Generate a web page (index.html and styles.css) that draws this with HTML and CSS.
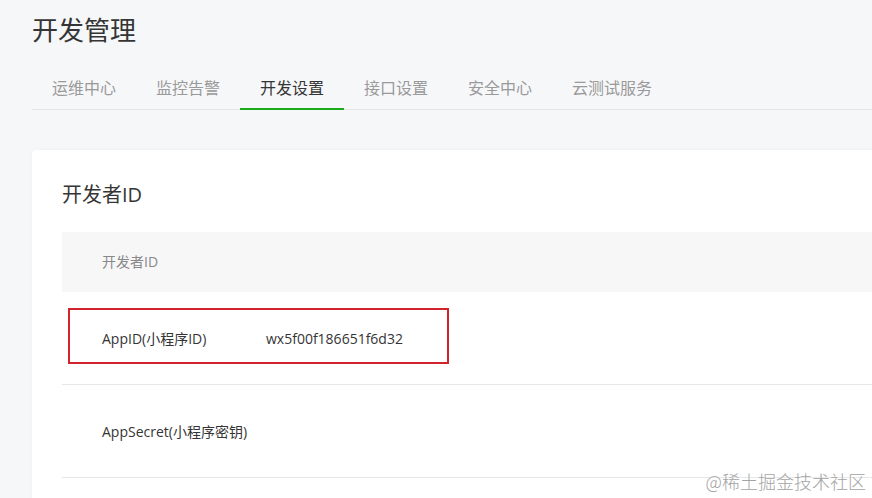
FILE: index.html
```html
<!DOCTYPE html>
<html lang="zh-CN">
<head>
<meta charset="utf-8">
<title>开发管理</title>
<link rel="stylesheet" href="styles.css">
</head>
<body>
<div class="page">
  <h1 class="title">开发管理</h1>
  <nav class="tabs">
    <a class="tab">运维中心</a>
    <a class="tab">监控告警</a>
    <a class="tab active">开发设置</a>
    <a class="tab">接口设置</a>
    <a class="tab">安全中心</a>
    <a class="tab">云测试服务</a>
  </nav>
  <section class="card">
    <h2 class="card-title">开发者ID</h2>
    <div class="table">
      <div class="thead">开发者ID</div>
      <div class="row">
        <div class="label">AppID(小程序ID)</div>
        <div class="value">wx5f00f186651f6d32</div>
        <div class="highlight"></div>
      </div>
      <div class="row">
        <div class="label">AppSecret(小程序密钥)</div>
        <div class="value"></div>
      </div>
    </div>
  </section>
</div>
<div class="watermark">@稀土掘金技术社区</div>
</body>
</html>
```
FILE: styles.css
```css
html, body {
  margin: 0;
  padding: 0;
}
body {
  background: #f6f7f9;
  font-family: "Open Sans", "Noto Sans CJK SC", sans-serif;
  color: #353535;
  width: 872px;
  height: 498px;
  overflow: hidden;
  position: relative;
}
.page {
  box-sizing: border-box;
  height: 498px;
  overflow: hidden;
  padding: 11px 0 0 32px;
}
.title {
  margin: 0;
  font-family: "Noto Sans CJK SC", sans-serif;
  font-size: 26px;
  line-height: 36px;
  font-weight: 400;
  color: #353535;
}
.tabs {
  margin-top: 28px;
  display: flex;
  border-bottom: 1px solid #e3e4e6;
}
.tab {
  padding: 0 20px 9px;
  font-family: "Noto Sans CJK SC", sans-serif;
  font-size: 16px;
  line-height: 24px;
  color: #9a9a9a;
  border-bottom: 2px solid transparent;
  margin-bottom: -1px;
}
.tab.active {
  color: #353535;
  border-bottom-color: #1aad19;
}
.card {
  margin-top: 40px;
  margin-right: -20px;
  background: #fff;
  border-radius: 4px;
  box-shadow: 0 0 4px rgba(0, 0, 0, 0.04);
  padding: 31px 0 0 30px;
  height: 400px;
}
.card-title {
  margin: 0;
  font-size: 20px;
  line-height: 28px;
  font-weight: 400;
  color: #353535;
}
.table {
  margin-top: 23px;
}
.thead {
  height: 60px;
  line-height: 60px;
  background: #f7f7f8;
  padding-left: 40px;
  font-size: 14px;
  color: #888;
}
.row {
  position: relative;
  display: flex;
  align-items: center;
  height: 92px;
  padding-left: 40px;
  border-bottom: 1px solid #e7e7e7;
  font-size: 14px;
  color: #353535;
}
.label {
  width: 164px;
}
.highlight {
  position: absolute;
  left: 6px;
  top: 16px;
  width: 377px;
  height: 52px;
  border: 2px solid #d2222d;
}
.watermark {
  position: absolute;
  right: 6px;
  bottom: 5px;
  font-family: "Noto Sans CJK SC", sans-serif;
  font-size: 18px;
  line-height: 24px;
  font-weight: 300;
  color: #a3a3a3;
  text-shadow: 0 0 2px #fff;
}
```
